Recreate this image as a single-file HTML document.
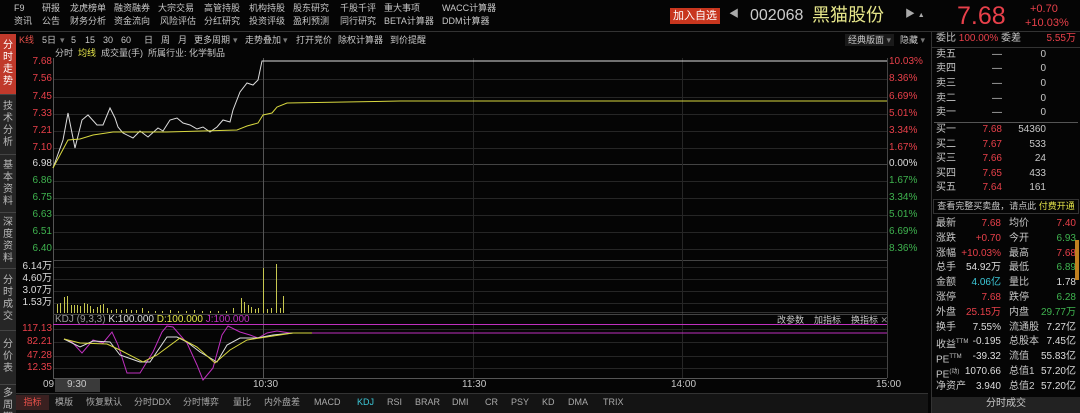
<!DOCTYPE html>
<html><head><meta charset="utf-8"><style>
*{margin:0;padding:0;box-sizing:border-box}
body{width:1080px;height:413px;background:#050505;overflow:hidden;position:relative;font-family:"Liberation Sans","Noto Sans CJK SC",sans-serif;font-size:10px;color:#c8c8c8}
.a{position:absolute;white-space:nowrap;line-height:12px}
.m{font-size:9px}
.r{color:#e8404a}.g{color:#3fb34f}.y{color:#e6e64a}.w{color:#ddd}.c{color:#3cc8d8}
.side{position:absolute;left:0;top:34px;width:16px;height:379px;background:#262626;overflow:hidden}
.side div{position:absolute;left:0;width:16px;text-align:center;font-size:10px;line-height:12px;color:#bbb;border-bottom:1px solid #444}
.rt{text-align:right}
</style></head><body>
<!-- top menu -->
<div class="a m" style="top:2px;left:14px">F9</div>
<div class="a m" style="top:2px;left:42px">研报</div>
<div class="a m" style="top:2px;left:70px">龙虎榜单</div>
<div class="a m" style="top:2px;left:114px">融资融券</div>
<div class="a m" style="top:2px;left:158px">大宗交易</div>
<div class="a m" style="top:2px;left:204px">高管持股</div>
<div class="a m" style="top:2px;left:249px">机构持股</div>
<div class="a m" style="top:2px;left:293px">股东研究</div>
<div class="a m" style="top:2px;left:340px">千股千评</div>
<div class="a m" style="top:2px;left:384px">重大事项</div>
<div class="a m" style="top:2px;left:442px">WACC计算器</div>
<div class="a m" style="top:15px;left:14px">资讯</div>
<div class="a m" style="top:15px;left:42px">公告</div>
<div class="a m" style="top:15px;left:70px">财务分析</div>
<div class="a m" style="top:15px;left:114px">资金流向</div>
<div class="a m" style="top:15px;left:160px">风险评估</div>
<div class="a m" style="top:15px;left:204px">分红研究</div>
<div class="a m" style="top:15px;left:249px">投资评级</div>
<div class="a m" style="top:15px;left:293px">盈利预测</div>
<div class="a m" style="top:15px;left:340px">同行研究</div>
<div class="a m" style="top:15px;left:384px">BETA计算器</div>
<div class="a m" style="top:15px;left:442px">DDM计算器</div>
<div style="position:absolute;left:0;top:31px;width:1080px;height:1px;background:#333"></div>
<!-- header right -->
<div class="a" style="top:8px;left:670px;width:50px;height:16px;background:#c8361e;color:#fff;font-size:11px;line-height:16px;text-align:center">加入自选</div>
<div class="a" style="top:9px;left:729px;color:#aaa">◀</div>
<div class="a" style="top:7px;left:750px;font-size:16px;line-height:18px;color:#ccc">002068</div>
<div class="a" style="top:5px;left:812px;font-size:18px;line-height:20px;color:#e6e68a">黑猫股份</div>
<div class="a" style="top:9px;left:905px;color:#aaa">▶ <span style="font-size:7px">▲</span></div>
<div class="a r" style="top:3px;left:957px;font-size:25px;line-height:26px">7.68</div>
<div class="a r" style="top:3px;left:1030px;font-size:11px">+0.70</div>
<div class="a r" style="top:17px;left:1025px;font-size:11px">+10.03%</div>
<!-- toolbar -->
<div class="a m" style="top:34px;left:19px;color:#e8504a">K线</div>
<div class="a m" style="top:34px;left:42px">5日</div>
<div class="a m" style="top:34px;left:60px;color:#777">▾</div>
<div class="a m" style="top:34px;left:71px">5</div>
<div class="a m" style="top:34px;left:85px">15</div>
<div class="a m" style="top:34px;left:103px">30</div>
<div class="a m" style="top:34px;left:121px">60</div>
<div class="a m" style="top:34px;left:144px">日</div>
<div class="a m" style="top:34px;left:161px">周</div>
<div class="a m" style="top:34px;left:178px">月</div>
<div class="a m" style="top:34px;left:194px">更多周期</div>
<div class="a m" style="top:34px;left:233px;color:#777">▾</div>
<div class="a m" style="top:34px;left:245px">走势叠加</div>
<div class="a m" style="top:34px;left:283px;color:#777">▾</div>
<div class="a m" style="top:34px;left:296px">打开竞价</div>
<div class="a m" style="top:34px;left:338px">除权计算器</div>
<div class="a m" style="top:34px;left:390px">到价提醒</div>
<div class="a m" style="top:47px;left:55px">分时&nbsp;&nbsp;<span class="y">均线</span>&nbsp;&nbsp;成交量(手)&nbsp;&nbsp;所属行业: 化学制品</div>
<div class="a m" style="top:34px;left:845px;background:#1a1a1a;padding:0 3px">经典版面 <span style="color:#777">▾</span></div>
<div class="a m" style="top:34px;left:900px">隐藏 <span style="color:#777">▾</span></div>
<!-- side -->
<div class="side">
<div style="top:0;height:61px;background:#c0392b;color:#fff;padding-top:6px">分<br>时<br>走<br>势</div>
<div style="top:61px;height:60px;padding-top:6px">技<br>术<br>分<br>析</div>
<div style="top:121px;height:58px;padding-top:5px">基<br>本<br>资<br>料</div>
<div style="top:179px;height:56px;padding-top:4px">深<br>度<br>资<br>料</div>
<div style="top:235px;height:62px;padding-top:6px">分<br>时<br>成<br>交</div>
<div style="top:297px;height:54px;padding-top:8px">分<br>价<br>表</div>
<div style="top:351px;height:40px;padding-top:3px">多<br>周<br>期</div>
</div>
<!-- chart -->
<svg style="position:absolute;left:0;top:0" width="1080" height="413">
<g stroke="#262626" stroke-width="1">
<line x1="53" y1="79.5" x2="887" y2="79.5"/><line x1="53" y1="97.5" x2="887" y2="97.5"/><line x1="53" y1="114.5" x2="887" y2="114.5"/><line x1="53" y1="131.5" x2="887" y2="131.5"/><line x1="53" y1="148.5" x2="887" y2="148.5"/>
<line x1="53" y1="164.5" x2="887" y2="164.5" stroke="#444"/>
<line x1="53" y1="181.5" x2="887" y2="181.5"/><line x1="53" y1="198.5" x2="887" y2="198.5"/><line x1="53" y1="215.5" x2="887" y2="215.5"/><line x1="53" y1="232.5" x2="887" y2="232.5"/><line x1="53" y1="249.5" x2="887" y2="249.5"/>
<line x1="53" y1="260.5" x2="887" y2="260.5" stroke="#444"/>
<line x1="53" y1="267.5" x2="887" y2="267.5"/><line x1="53" y1="279.5" x2="887" y2="279.5"/><line x1="53" y1="291.5" x2="887" y2="291.5"/><line x1="53" y1="303.5" x2="887" y2="303.5"/>
<line x1="53" y1="329.5" x2="887" y2="329.5"/><line x1="53" y1="342.5" x2="887" y2="342.5"/><line x1="53" y1="356.5" x2="887" y2="356.5"/><line x1="53" y1="368.5" x2="887" y2="368.5"/>
<line x1="473.5" y1="58" x2="473.5" y2="378"/><line x1="682.5" y1="58" x2="682.5" y2="378"/>
</g>
<line x1="263.5" y1="58" x2="263.5" y2="378" stroke="#555"/>
<line x1="53.5" y1="58" x2="53.5" y2="378" stroke="#555"/>
<line x1="887.5" y1="58" x2="887.5" y2="378" stroke="#444"/>
<line x1="53" y1="314.5" x2="887" y2="314.5" stroke="#444"/>
<line x1="53" y1="324.5" x2="887" y2="324.5" stroke="#c030c0"/>
<line x1="53" y1="378.5" x2="887" y2="378.5" stroke="#555"/>
<polyline fill="none" stroke="#ddd" stroke-width="1" points="53,168 63,140 68,113 75,148 82,120 88,115 97,125 103,125 110,108 115,118 118,127 123,133 133,138 140,131 148,137 158,128 163,131 170,120 177,118 183,123 190,125 197,129 203,127 210,132 217,127 223,120 230,122 233,110 240,92 247,83 253,85 258,80 262,61 887,61"/>
<polyline fill="none" stroke="#d8d840" stroke-width="1" points="53,168 60,155 68,140 80,139 93,135 113,132 167,132 237,130 247,126 258,123 263,115 272,113 277,107 287,103 400,101 887,101"/>
<g fill="#c8c850">
<rect x="57" y="304" width="1" height="9"/><rect x="60" y="303" width="1" height="10"/><rect x="64" y="297" width="1" height="16"/><rect x="67" y="296" width="1" height="17"/><rect x="71" y="305" width="1" height="8"/><rect x="74" y="305" width="1" height="8"/><rect x="77" y="305" width="1" height="8"/><rect x="80" y="306" width="1" height="7"/><rect x="84" y="303" width="1" height="10"/><rect x="87" y="304" width="1" height="9"/><rect x="90" y="306" width="1" height="7"/><rect x="93" y="309" width="1" height="4"/><rect x="97" y="307" width="1" height="6"/><rect x="100" y="305" width="1" height="8"/><rect x="103" y="304" width="1" height="9"/><rect x="107" y="308" width="1" height="5"/>
<rect x="111" y="310" width="1" height="3"/><rect x="116" y="309" width="1" height="4"/><rect x="121" y="310" width="1" height="3"/><rect x="126" y="309" width="1" height="4"/><rect x="131" y="310" width="1" height="3"/><rect x="136" y="310" width="1" height="3"/><rect x="142" y="308" width="1" height="5"/><rect x="148" y="311" width="1" height="2"/><rect x="155" y="311" width="1" height="2"/><rect x="162" y="311" width="1" height="2"/><rect x="170" y="310" width="1" height="3"/><rect x="178" y="311" width="1" height="2"/><rect x="186" y="311" width="1" height="2"/><rect x="194" y="310" width="1" height="3"/><rect x="202" y="311" width="1" height="2"/><rect x="210" y="311" width="1" height="2"/><rect x="218" y="311" width="1" height="2"/><rect x="226" y="311" width="1" height="2"/><rect x="233" y="308" width="1" height="5"/>
<rect x="241" y="298" width="1" height="15"/><rect x="244" y="302" width="1" height="11"/><rect x="248" y="305" width="1" height="8"/><rect x="251" y="307" width="1" height="6"/><rect x="255" y="309" width="1" height="4"/><rect x="258" y="308" width="1" height="5"/><rect x="263" y="268" width="1" height="45"/><rect x="267" y="309" width="1" height="4"/><rect x="271" y="308" width="1" height="5"/><rect x="276" y="264" width="1" height="49"/><rect x="280" y="308" width="1" height="5"/><rect x="283" y="296" width="1" height="17"/>
</g>
<g fill="#888"><rect x="290" y="312" width="597" height="1" opacity=".35"/></g>
<polyline fill="none" stroke="#c030c0" points="64,339 72,342 82,353 93,340 103,343 112,332 118,345 127,373 140,373 153,352 162,332 167,326 173,327 187,343 197,365 203,380 213,368 222,335 228,326 240,332 250,335 258,338 267,333 277,331 290,333 887,333"/>
<polyline fill="none" stroke="#e0e0e0" points="64,339 80,347 93,341 110,342 120,355 140,362 150,362 167,337 177,337 187,342 200,352 217,362 227,345 240,338 257,338 273,335 293,333 310,333"/>
<polyline fill="none" stroke="#d8d840" points="64,339 80,343 107,344 120,350 143,362 157,355 180,338 197,347 215,363 230,350 247,340 273,336 293,333 312,333"/>
</svg>
<!-- axis labels -->
<div class="a r rt" style="top:56px;left:20px;width:32px">7.68</div>
<div class="a r rt" style="top:73px;left:20px;width:32px">7.56</div>
<div class="a r rt" style="top:91px;left:20px;width:32px">7.45</div>
<div class="a r rt" style="top:108px;left:20px;width:32px">7.33</div>
<div class="a r rt" style="top:125px;left:20px;width:32px">7.21</div>
<div class="a r rt" style="top:142px;left:20px;width:32px">7.10</div>
<div class="a w rt" style="top:158px;left:20px;width:32px">6.98</div>
<div class="a g rt" style="top:175px;left:20px;width:32px">6.86</div>
<div class="a g rt" style="top:192px;left:20px;width:32px">6.75</div>
<div class="a g rt" style="top:209px;left:20px;width:32px">6.63</div>
<div class="a g rt" style="top:226px;left:20px;width:32px">6.51</div>
<div class="a g rt" style="top:243px;left:20px;width:32px">6.40</div>
<div class="a w rt" style="top:261px;left:18px;width:34px">6.14万</div>
<div class="a w rt" style="top:273px;left:18px;width:34px">4.60万</div>
<div class="a w rt" style="top:285px;left:18px;width:34px">3.07万</div>
<div class="a w rt" style="top:297px;left:18px;width:34px">1.53万</div>
<div class="a" style="top:314px;left:55px;color:#999">KDJ (9,3,3) <span class="w">K:100.000</span> <span class="y">D:100.000</span> <span style="color:#c030c0">J:100.000</span></div>
<div class="a m" style="top:314px;left:777px">改参数&nbsp;&nbsp;&nbsp;&nbsp;加指标&nbsp;&nbsp;&nbsp;&nbsp;换指标 <span style="color:#888">✕</span></div>
<div class="a r rt" style="top:323px;left:18px;width:34px">117.13</div>
<div class="a r rt" style="top:336px;left:18px;width:34px">82.21</div>
<div class="a r rt" style="top:350px;left:18px;width:34px">47.28</div>
<div class="a r rt" style="top:362px;left:18px;width:34px">12.35</div>
<div class="a r" style="top:56px;left:889px">10.03%</div>
<div class="a r" style="top:73px;left:889px">8.36%</div>
<div class="a r" style="top:91px;left:889px">6.69%</div>
<div class="a r" style="top:108px;left:889px">5.01%</div>
<div class="a r" style="top:125px;left:889px">3.34%</div>
<div class="a r" style="top:142px;left:889px">1.67%</div>
<div class="a w" style="top:158px;left:889px">0.00%</div>
<div class="a g" style="top:175px;left:889px">1.67%</div>
<div class="a g" style="top:192px;left:889px">3.34%</div>
<div class="a g" style="top:209px;left:889px">5.01%</div>
<div class="a g" style="top:226px;left:889px">6.69%</div>
<div class="a g" style="top:243px;left:889px">8.36%</div>
<!-- time axis -->
<div class="a" style="top:379px;left:43px">09</div>
<div class="a" style="top:379px;left:55px;width:45px;height:13px;background:#3a3a3a;padding-left:12px">9:30</div>
<div class="a" style="top:379px;left:253px">10:30</div>
<div class="a" style="top:379px;left:462px">11:30</div>
<div class="a" style="top:379px;left:671px">14:00</div>
<div class="a" style="top:379px;left:876px">15:00</div>
<!-- bottom tabs -->
<div style="position:absolute;left:16px;top:393px;width:912px;height:20px;background:#141414;border-top:1px solid #333"></div>
<div class="a m" style="top:395px;left:16px;width:33px;height:15px;background:#3a2020;color:#e8504a;text-align:center;line-height:15px">指标</div>
<div class="a m" style="top:396px;left:55px;color:#aaa">模版</div>
<div class="a m" style="top:396px;left:86px;color:#aaa">恢复默认</div>
<div class="a m" style="top:396px;left:134px;color:#aaa">分时DDX</div>
<div class="a m" style="top:396px;left:183px;color:#aaa">分时博弈</div>
<div class="a m" style="top:396px;left:233px;color:#aaa">量比</div>
<div class="a m" style="top:396px;left:264px;color:#aaa">内外盘差</div>
<div class="a m" style="top:396px;left:314px;color:#aaa">MACD</div>
<div class="a m c" style="top:396px;left:357px">KDJ</div>
<div class="a m" style="top:396px;left:387px;color:#aaa">RSI</div>
<div class="a m" style="top:396px;left:415px;color:#aaa">BRAR</div>
<div class="a m" style="top:396px;left:452px;color:#aaa">DMI</div>
<div class="a m" style="top:396px;left:485px;color:#aaa">CR</div>
<div class="a m" style="top:396px;left:511px;color:#aaa">PSY</div>
<div class="a m" style="top:396px;left:542px;color:#aaa">KD</div>
<div class="a m" style="top:396px;left:568px;color:#aaa">DMA</div>
<div class="a m" style="top:396px;left:603px;color:#aaa">TRIX</div>
<!-- right panel -->
<div style="position:absolute;left:931px;top:32px;width:1px;height:381px;background:#333"></div>
<div class="a" style="top:33px;left:936px">委比 <span class="r">100.00%</span> 委差</div>
<div class="a r rt" style="top:33px;left:1030px;width:46px">5.55万</div>
<div style="position:absolute;left:932px;top:47px;width:148px;height:1px;background:#333"></div>
<div style="position:absolute;left:934px;top:122px;width:144px;height:1px;background:#555"></div>
<div id="ob"></div>
<div style="position:absolute;left:933px;top:199px;width:146px;height:15px;border:1px solid #333;font-size:9px;line-height:13px;text-align:center">查看完整买卖盘，请点此 <span class="y">付费开通</span></div>
<div class="a" style="top:397px;left:932px;width:148px;height:16px;background:#222;text-align:center;line-height:14px">分时成交</div>
<div style="position:absolute;left:1075px;top:240px;width:4px;height:40px;background:#c08020"></div>
<script>
var ob=[["卖五","—","0",49],["卖四","—","0",63],["卖三","—","0",78],["卖二","—","0",93],["卖一","—","0",107],["买一","7.68","54360",124],["买二","7.67","533",139],["买三","7.66","24",153],["买四","7.65","433",168],["买五","7.64","161",182]];
var h="";ob.forEach(function(r){var pc=r[1]=="—"?"#ccc":"#e8404a";h+='<div class="a" style="top:'+r[3]+'px;left:936px">'+r[0]+'</div><div class="a rt" style="top:'+r[3]+'px;left:960px;width:42px;color:'+pc+'">'+r[1]+'</div><div class="a rt" style="top:'+r[3]+'px;left:1004px;width:42px">'+r[2]+'</div>';});
var q=[["最新","7.68","r","均价","7.40","r"],["涨跌","+0.70","r","今开","6.93","g"],["涨幅","+10.03%","r","最高","7.68","r"],["总手","54.92万","w","最低","6.89","g"],["金额","4.06亿","c","量比","1.78","w"],["涨停","7.68","r","跌停","6.28","g"],["外盘","25.15万","r","内盘","29.77万","g"],["换手","7.55%","w","流通股","7.27亿","w"],["收益<sup style='font-size:6px'>TTM</sup>","-0.195","w","总股本","7.45亿","w"],["PE<sup style='font-size:6px'>TTM</sup>","-39.32","w","流值","55.83亿","w"],["PE<sup style='font-size:6px'>(动)</sup>","1070.66","w","总值1","57.20亿","w"],["净资产","3.940","w","总值2","57.20亿","w"]];
var y=218;q.forEach(function(r){h+='<div class="a" style="top:'+y+'px;left:936px">'+r[0]+'</div><div class="a rt '+r[2]+'" style="top:'+y+'px;left:955px;width:46px">'+r[1]+'</div><div class="a" style="top:'+y+'px;left:1009px">'+r[3]+'</div><div class="a rt '+r[5]+'" style="top:'+y+'px;left:1030px;width:46px">'+r[4]+'</div>';y+=14.8;});
document.getElementById("ob").innerHTML=h;
</script>
</body></html>
